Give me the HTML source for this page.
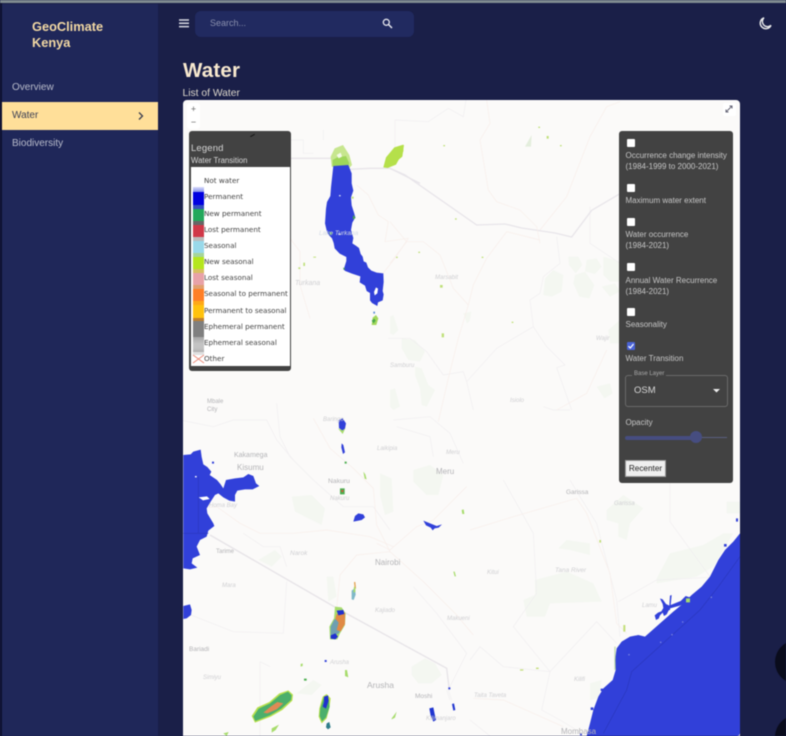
<!DOCTYPE html>
<html><head><meta charset="utf-8"><title>GeoClimate Kenya</title>
<style>
html,body{margin:0;padding:0;width:786px;height:736px;overflow:hidden;background:#1a1f48;}
body{font-family:"Liberation Sans",sans-serif;position:relative;}
#w{position:absolute;left:0;top:0;width:786px;height:736px;overflow:hidden;filter:blur(.45px);}
.a{position:absolute;white-space:nowrap;}
.nav{font-size:10px;color:#b9bccb;left:12px;}
.lg{position:absolute;left:204px;font:7.2px "DejaVu Sans",sans-serif;color:#444;white-space:nowrap;line-height:10px;}
.sw{position:absolute;left:193px;width:11px;height:16.2px;}
.cb{position:absolute;left:627px;width:8px;height:8px;background:#fff;border-radius:1px;}
.pl{position:absolute;left:625.5px;font-size:8px;line-height:10.5px;color:#c6c6c6;white-space:nowrap;}
</style></head><body><div id="w">
<div class="a" style="left:0;top:0;width:786px;height:3px;background:#7f8b90"></div>
<div class="a" style="left:0;top:3px;width:2px;height:733px;background:#0d1030"></div>
<div class="a" style="left:2px;top:4px;width:156px;height:732px;background:#1f2759"></div>

<div class="a" style="left:32px;top:19px;font-size:12.8px;line-height:16px;font-weight:bold;color:#f3d9a4;">GeoClimate<br>Kenya</div>
<div class="a nav" style="top:82px">Overview</div>
<div class="a" style="left:2px;top:102px;width:156px;height:28px;background:#ffdf99"></div>
<div class="a nav" style="top:110px;color:#3c3f55">Water</div>
<svg class="a" style="left:137px;top:111px" width="8" height="10" viewBox="0 0 8 10"><path d="M2 1.500l3.500 3.500-3.500 3.500" fill="none" stroke="#3a3d50" stroke-width="1.300"/></svg>
<div class="a nav" style="top:138px">Biodiversity</div>

<svg class="a" style="left:179px;top:19px" width="10" height="9" viewBox="0 0 10 9"><path d="M0 1h10M0 4.300h10M0 7.600h10" stroke="#d8d9e2" stroke-width="1.500"/></svg>
<div class="a" style="left:195px;top:11px;width:219px;height:26px;background:#212a60;border-radius:6px"></div>
<div class="a" style="left:210px;top:18px;font-size:9px;color:#8a90ad">Search...</div>
<svg class="a" style="left:382px;top:18px" width="11" height="11" viewBox="0 0 11 11"><circle cx="4.300" cy="4.300" r="3" fill="none" stroke="#e6e7ee" stroke-width="1.300"/><path d="M6.500 6.500L10 10" stroke="#e6e7ee" stroke-width="1.500"/></svg>
<svg class="a" style="left:758px;top:16px" width="15" height="15" viewBox="0 0 15 15"><path d="M6 1.800A5.600 5.600 0 1 0 13 9.300 4.800 4.800 0 0 1 6 1.800Z" fill="none" stroke="#eceded" stroke-width="1.400"/></svg>

<div class="a" style="left:183px;top:59px;font-size:20.500px;line-height:24px;font-weight:bold;color:#f8e9cf;letter-spacing:.2px">Water</div>
<div class="a" style="left:182.500px;top:87px;font-size:10.300px;line-height:13px;color:#ddd8cc;">List of Water</div>

<div class="a" style="left:775px;top:640px;width:44px;height:44px;border-radius:50%;background:#0a0c1c"></div>
<div class="a" style="left:775px;top:715px;width:44px;height:44px;border-radius:50%;background:#0a0c1c"></div>

<!-- map -->
<div class="a" style="left:183px;top:100px;width:557px;height:636px;background:#fbfaf9;border-radius:4px 4px 0 0;overflow:hidden"></div>
<svg class="a" style="left:0;top:0" width="786" height="736" viewBox="0 0 786 736">
<defs><clipPath id="c"><rect x="183" y="100" width="557" height="636" rx="3"/></clipPath></defs>
<g clip-path="url(#c)">
 <!-- north section (zoom 390,100) -->
 <g transform="translate(390 100) scale(.33333)">
  <g fill="#f4f7f1">
   <path d="M490 510l30 15-5 50-30 15-25-5 5-50z"/><path d="M555 525l30-10 28 40-15 40-30-5-18-40z"/><path d="M590 480l30-5 15 25-20 22-30-8z"/><path d="M640 470l50 15v60h-30l-20-20z"/><path d="M635 560l40-10 15 25-30 15z"/><path d="M535 470l30 0 12 25-20 25-20-25z"/>
   <path d="M35 715l40 5 30 35-15 30-35-5-20-35z"/><path d="M75 800l20 5 20 50 20 15-25 50-15-5-5-50-15-40z"/><path d="M0 870l15-5 15 55-20 10-10-10z"/><path d="M220 640l24-5-5 28-8 8z"/><path d="M0 650l10-5 15 45-15 15-10-5z"/><path d="M620 860l40-10 8 30-25 15zM655 690l35-30v70l-30 0z"/>
  </g>
  <path d="M405 140l20-35-2 35z" fill="#e4eedd"/>
  <g fill="none" stroke="#f0eef0" stroke-width="2">
   <path d="M15 60l0 120M15 60l100 5 60-40 45 25 8-50M600 320v110l90 60"/>
   <path d="M430 680l40 60 55 55-25 8 45 127M430 680l-110 65-90 100-10-30-60 10-50-70-50-40-65 0M230 845l20 85"/>
   <path d="M500 410l10 80-50 40-10 50-30 20 10 80"/>
   <path d="M540 930l-50 0-30 -10"/>
  </g>
  <path d="M0 205l45 20 215 150 85-3 50 12 100 15 50 12 60-80 85-50" fill="none" stroke="#e8e5ea" stroke-width="4"/>
  <g fill="none" stroke="#f8eeea" stroke-width="2">
   <path d="M290 0l10 70-30 50 25 150 25 35 70 25 50 50 10 50M450 390l80-100 70-180 50-90 40-15"/>
   <path d="M450 420l-100-25-60 80-40 80-15 60-30 100-30 120-30 130"/>
   <path d="M0 365l50 60 50 0 50 40 40 100 45 50M50 425L0 490"/>
   <path d="M650 750l-60 130-90 50"/>
  </g>
  <path d="M2 160l20-20 20-5-5 35-25 20-12 5z" fill="#b5e04a"/>
  <path d="M0 160l4-6 0 40-4 4z" fill="#b5e04a"/>
  <g fill="#bfe07a"><rect x="160" y="135" width="5" height="4"/><rect x="445" y="80" width="5" height="4"/><rect x="470" y="108" width="6" height="8"/><rect x="510" y="135" width="5" height="4"/><rect x="195" y="355" width="5" height="4"/><rect x="85" y="455" width="5" height="4"/><rect x="18" y="470" width="5" height="4"/><rect x="150" y="555" width="8" height="8"/><rect x="155" y="700" width="7" height="12"/><rect x="275" y="470" width="5" height="4"/><rect x="365" y="665" width="5" height="4"/></g>
 </g>

 <!-- south-west (zoom 180,400) -->
 <g transform="translate(180 400) scale(.33333)">
  <g fill="#f4f7f1">
   <path d="M695 800l40-25 30 15 20 35-30 25-40 0-20-25z"/><path d="M700 210l50-15 40 30-15 60-35 0-40-40z"/><path d="M335 290l60-5 40 40-10 50-30-15-50-25z"/><path d="M600 220l35 15 5 100-25 10-15-60z"/><path d="M440 530l20 0 10 60-25 15z"/><path d="M350 880l50-40 25 15-30 30zM235 480l50-30 20 20-30 30z"/>
  </g>
  <g fill="none" stroke="#f0eef0" stroke-width="2">
   <path d="M20 640l140 55 150 5 10-155M240 785v225M240 785l30 15M700 560l70 80 90 120-55 110 10 30"/>
   <path d="M190 400l60 40 50 0 20 60M640 60l110 -10 60 50 40 90M650 80l100 30 10 60M0 60l100 20 60 -20 100 0 30 60 50 60"/>
   <path d="M290 10l10 100 30 60 70 70 90 80 90 0 50 70M800 870l10 30"/>
  </g>
  <path d="M90 405L480 630l320 175 8 65" fill="none" stroke="#e7e4e8" stroke-width="4"/>
  <g fill="none" stroke="#f8eeea" stroke-width="2">
   <path d="M10 330l100-10 70 50 60 30 100 0 100-10 130 20 70 30M590 430l40 20 80-70 50-20 100-100"/>
   <path d="M630 455l-100 10-50 60-10 100M630 455l100 90 100 100 50 60M630 455l-40-80-10-110-60-60-70-60-50-90"/>
  </g>
  <path fill="#3140d9" d="M10 165L32 163 40 155 62 149 65 171 70 193 82 201 94 215 89 225 111 240 121 252 130 265 138 240 165 235 190 232 205 222 220 228 228 250 238 258 218 268 195 268 172 272 165 285 165 305 148 302 130 292 115 280 105 285 92 305 80 325 82 340 100 370 103 378 85 392 80 410 60 420 50 440 60 465 38 475 35 490 52 503 30 508 10 505Z"/>
  <path fill="#fff" d="M56 292l25-3 8 8-20 4zM45 228h5v4h-5z"/>
  <path fill="none" stroke="#2a37bc" stroke-width="2" d="M10 400h75M55 230v170"/>
  <path fill="#3140d9" d="M10 618L30 613 35 630 33 645 20 655 10 657ZM525 348L535 340 550 343 555 352 545 360 530 363 520 365Z"/>
  <path fill="#3140d9" d="M476 60L488 55 498 70 495 86 487 92 477 84ZM485 130L490 135 495 157 489 162 484 142ZM730 362L755 372 770 378 786 373 776 383 764 385 758 391 752 383 738 376ZM96 185h6v6h-6z"/>
  <path fill="#a7dc6c" d="M474 85L488 91 496 85 488 102ZM550 215L556 223 560 238 554 236ZM495 810L501 810 505 832 495 828ZM275 985L297 974 287 990 275 998ZM635 955L650 935 645 953 635 958Z"/>
  <path fill="#4caf50" d="M480 265h14v18h-14zM494 185h6v6h-6z"/>
  <path fill="#d8513c" d="M484 270h6v6h-6z"/>
  <!-- Natron -->
  <path fill="#a7dc6c" d="M465 620L485 622 497 640 495 675 480 700 472 718 450 718 448 680 462 655Z"/>
  <path fill="#6e9fb0" d="M462 660L490 640 492 675 476 700 452 712 452 680Z"/>
  <path fill="#e08a45" d="M470 642L495 638 495 672 482 694 470 690 476 668 466 656Z"/>
  <path fill="#2030d0" d="M470 632L490 630 493 642 475 646ZM452 706L466 700 474 710 466 718 452 716Z"/>
  <!-- Eyasi -->
  <path fill="#b7e04d" d="M215 948L232 922 268 906 298 880 325 871 339 884 337 902 307 930 272 950 225 968Z"/>
  <path fill="#4caf6b" d="M220 950L236 926 270 910 300 885 324 875 335 886 333 900 304 926 270 946 226 963Z"/>
  <path fill="#e08a55" d="M250 938L272 920 292 906 310 910 290 928 262 940Z"/>
  <!-- Manyara -->
  <path fill="#b7e04d" d="M418 925L428 890 440 882 452 895 448 925 440 955 425 970 416 950Z"/>
  <path fill="#4caf6b" d="M421 925L431 893 444 886 449 920 438 952 426 964 419 948Z"/>
  <path fill="#2030d0" d="M432 890L444 886 446 902 438 926 428 920 432 906Z"/>
  <path fill="#2f7d8a" d="M440 970L448 966 452 982 444 988 438 982Z"/>
  <path fill="#2035d0" d="M748 925L760 922 764 942 768 960 760 965 752 947ZM816 912L822 910 826 930 820 932Z"/>
  <path fill="#e3a14f" d="M522 546L526 546 528 566 524 566Z"/>
  <path fill="#7fb8c8" d="M515 572L525 564 527 584 521 600 515 598Z"/>
  <path fill="#a7dc6c" d="M522 560L526 562 526 576 520 578Z"/>
  <path fill="#4caf50" d="M372 836h8v6h-8z"/>
  <path fill="#3140d9" d="M434 780h6v6h-6zM805 862h6v6h-6z"/>
  <path fill="#a7dc6c" d="M362 792L368 790 368 798 362 800ZM130 1000L146 996 140 1008ZM845 330L851 328 853 342 847 342ZM820 515L824 515 828 529 824 529Z"/>
 </g>

 <!-- south-east (zoom 470,480) -->
 <g transform="translate(470 480) scale(.33333)">
  <g fill="#f4f7f1">
   <path d="M195 300L290 275 370 310 395 365 240 370 225 410 170 410 160 360 195 345Z"/><path d="M410 90L460 45 520 85 480 130 470 180 445 170 445 130 410 120Z"/><path d="M265 205L290 180 360 190 360 225 300 210Z"/><path d="M560 295L600 220 700 195 760 160 790 160 730 260 680 290 560 310Z"/><path d="M770 65h40v35h-40zM360 610L395 600 385 655 360 660Z"/>
  </g>
  <g fill="none" stroke="#f0eef0" stroke-width="2">
   <path d="M100 0L190 160 200 340 130 440 240 575 380 425 440 490"/>
   <path d="M600 0V125L720 290 745 320M445 365L560 300 720 292"/>
   <path d="M0 540L30 500 100 560 240 575 215 690 270 720 350 768M0 720L60 768"/>
   <path d="M300 0L330 50 380 130 440 360 450 470"/>
  </g>
  <g fill="none" stroke="#f8eeea" stroke-width="2">
   <path d="M0 150L130 110 320 55 350 100 420 280 440 430 470 460M10 655L100 660 190 700 280 740"/>
  </g>
  <path fill="#3140d9" d="M810 160L790 185 765 210 745 240 720 290 695 320 665 345 640 370 610 395 570 430 525 470 505 465 480 470 455 485 440 505 435 540 437 570 428 600 400 625 385 650 370 690 360 730 350 768H810Z"/>
  <path fill="#3140d9" d="M570 355L578 358 588 372 598 377 600 347 605 345 602 375 632 363 647 348 662 353 664 363 634 375 606 387 596 391 590 403 582 408 578 398 570 406 566 416 558 420 554 406 564 398 574 394 580 384 578 372 572 360Z"/>
  <path fill="#fff" d="M600 385L630 377 616 389 602 395Z"/>
  <path fill="none" stroke="#2a37bc" stroke-width="2" d="M810 230L745 320 690 390 590 480 485 575 470 630 400 760"/>
  <path fill="#a7dc6c" d="M648 355h12v12h-12z"/>
  <path fill="#3140d9" d="M362 682h8v8h-8zM392 626h7v7h-7zM762 192h8v8h-8zM798 115h6v10h-6zM330 760h6v6h-6z"/>
  <path fill="#a8cf8a" d="M433 500h4v70h-4z" opacity=".7"/>
  <path fill="#c2de78" d="M460 435h6v20h-6zM388 180h5v8h-5zM150 568h10v4h-10zM198 563h8v4h-8z"/>
  <path fill="#7b86e0" d="M475 522h4v4h-4zM570 485h4v4h-4zM604 462h4v4h-4zM636 424h4v4h-4zM722 350h4v4h-4z"/>
 </g>

 <!-- Turkana (zoom 290,130) -->
 <g transform="translate(290 130) scale(.33333)">
  <g fill="none" stroke="#f0eef0" stroke-width="2"><path d="M0 30h40l0 40 30 0M100 0v30"/><path d="M40 85h90"/></g>
  <path d="M0 85h130M180 118l60-3 60 0 90 45" fill="none" stroke="#e8e5ea" stroke-width="4"/>
  <g fill="none" stroke="#f8eeea" stroke-width="2"><path d="M200 165l35 30 30 60 30 20-10 60 70-10-40 60-40 50M0 325l30 40 0 100 30 100"/></g>
  <path fill="#c7e68f" d="M125 110L122 80 134 55 159 45 178 75 186 105 168 125Z"/>
  <path fill="#9fd65a" d="M128 108L128 90 142 82 168 78 178 100 172 115Z"/>
  <path fill="#fff" d="M140 75L152 68 156 80 146 85Z" opacity=".8"/>
  <path fill="#b5e04a" d="M280 112L288 82 313 52 340 44 340 64 318 104 293 114Z"/>
  <path fill="#a3d85c" d="M245 585L248 563 258 555 265 565 259 585Z"/>
  <path fill="#3140d9" d="M130 108L175 105 185 130 185 160 190 182 183 202 185 226 192 248 196 262 187 278 183 300 190 324 187 340 199 348 207 354 212 372 218 380 221 394 229 398 234 412 244 422 260 428 280 430 281 456 278 483 281 493 278 511 264 517 262 528 246 519 240 511 240 489 230 483 225 467 209 457 211 439 186 431 166 423 161 419 169 393 169 381 149 371 134 355 131 339 126 325 112 310 105 280 108 236 111 216 121 198 123 172Z"/>
  <path fill="#fff" d="M252 486L258 472 264 476 262 490 254 496Z"/>
  <path fill="#cfd4f5" d="M147 195h5v4h-5zM145 310h6v5h-6z"/>
  <path fill="#4aa84a" d="M118 305L128 309 120 316ZM190 255L197 264 188 268ZM160 412L166 417 160 419ZM245 572L253 566 257 572 251 580Z"/>
  <path fill="#5d8ed8" d="M250 545h5v6h-5z"/>
  <g fill="#bfe07a"><rect x="70" y="380" width="8" height="3"/><rect x="40" y="398" width="5" height="10"/><rect x="25" y="412" width="6" height="5"/><rect x="185" y="200" width="6" height="6"/></g>
 </g>
 <!-- labels -->
 <g font-family="Liberation Sans, sans-serif" fill="#b0b0b3">
  <g fill="#b4b4b7">
  <text x="234" y="457" font-size="7">Kakamega</text>
  <text x="237" y="470" font-size="8">Kisumu</text>
  <text x="328" y="483" font-size="6.800">Nakuru</text>
  <text x="436" y="474" font-size="8">Meru</text>
  <text x="375" y="565" font-size="8">Nairobi</text>
  <text x="367" y="688" font-size="8.500">Arusha</text>
  <text x="415" y="698" font-size="6.500">Moshi</text>
  <text x="189" y="651" font-size="6.500">Bariadi</text>
  <text x="216" y="553" font-size="6">Tarime</text>
  <text x="566" y="494" font-size="6.500">Garissa</text>
  <text x="561" y="734" font-size="8">Mombasa</text>
  <text x="207" y="403" font-size="6">Mbale</text>
  <text x="207" y="411" font-size="6">City</text>
  </g>
  <g font-style="italic" fill="#d0d0d3">
   <text x="295" y="285" font-size="7">Turkana</text>
   <text x="319" y="235" font-size="6.500" fill="#d3dbe6">Lake Turkana</text>
   <text x="323" y="421" font-size="6">Baringo</text>
   <text x="377" y="450" font-size="6">Laikipia</text>
   <text x="446" y="454" font-size="6">Meru</text>
   <text x="330" y="500" font-size="6">Nakuru</text>
   <text x="290" y="555" font-size="6.500">Narok</text>
   <text x="222" y="587" font-size="6">Mara</text>
   <text x="375" y="612" font-size="6">Kajiado</text>
   <text x="447" y="620" font-size="6">Makueni</text>
   <text x="330" y="664" font-size="6">Arusha</text>
   <text x="203" y="679" font-size="6">Simiyu</text>
   <text x="426" y="720" font-size="6">Kilimanjaro</text>
   <text x="614" y="505" font-size="6">Garissa</text>
   <text x="555" y="572" font-size="6.500">Tana River</text>
   <text x="487" y="574" font-size="6">Kitui</text>
   <text x="642" y="607" font-size="6">Lamu</text>
   <text x="574" y="681" font-size="6">Kilifi</text>
   <text x="474" y="697" font-size="6">Taita Taveta</text>
   <text x="209" y="507" font-size="6">Homa Bay</text>
   <text x="390" y="367" font-size="6">Samburu</text>
   <text x="435" y="279" font-size="6">Marsabit</text>
   <text x="510" y="402" font-size="6">Isiolo</text>
   <text x="596" y="340" font-size="6">Wajir</text>
  </g>
 </g>
</g>
</svg>

<!-- zoom ctrl -->
<div class="a" style="left:187px;top:103px;width:13px;height:26px;background:#fff;border-radius:3px"></div>
<div class="a" style="left:187px;top:103px;width:13px;text-align:center;font-size:9px;line-height:12px;color:#666">+</div>
<div class="a" style="left:187px;top:116px;width:13px;text-align:center;font-size:9px;line-height:12px;color:#666">−</div>
<div class="a" style="left:723px;top:103px;width:13px;height:13px;background:#fff;border-radius:2px"></div>
<svg class="a" style="left:725px;top:105px" width="8" height="8" viewBox="0 0 8 8"><path d="M1.500 6.500L6.500 1.500M4.500 1H7v2.500M1 4.500V7h2.500" fill="none" stroke="#667" stroke-width="1"/></svg>

<!-- legend -->
<div class="a" style="left:189px;top:131px;width:102px;height:240px;background:#424242;border-radius:3px"></div>
<div class="a" style="left:250px;top:135px;width:5px;height:1px;background:#111;transform:rotate(-30deg)"></div>
<div class="a" style="left:191px;top:143px;font-size:9.500px;line-height:12px;color:#d4d4d4;letter-spacing:.15px">Legend</div>
<div class="a" style="left:191px;top:155px;font-size:7.800px;line-height:11px;color:#d8d8d8;">Water Transition</div>
<div class="a" style="left:191px;top:167px;width:99px;height:199px;background:#fff"></div>

<div class="sw" style="top:187px;height:8px;background:linear-gradient(#d9dcfa,#5060e0)"></div>
<div class="sw" style="top:192px;background:#0000df"></div>
<div class="sw" style="top:205px;height:4px;background:#3650c0"></div>
<div class="sw" style="top:208.500px;background:#23a85b"></div>
<div class="sw" style="top:221px;height:4px;background:#666"></div>
<div class="sw" style="top:224.500px;background:#d03848"></div>
<div class="sw" style="top:237px;height:4px;background:#bbb"></div>
<div class="sw" style="top:240.500px;background:#99d9ea"></div>
<div class="sw" style="top:253px;height:4px;background:#a6d59a"></div>
<div class="sw" style="top:256.500px;background:#b5e61d"></div>
<div class="sw" style="top:269px;height:4px;background:#d8c060"></div>
<div class="sw" style="top:272.500px;background:#e8a2a8"></div>
<div class="sw" style="top:285px;height:4px;background:#e0a070"></div>
<div class="sw" style="top:288.500px;background:#ff7f27"></div>
<div class="sw" style="top:301px;height:4px;background:#ffa818"></div>
<div class="sw" style="top:304.500px;height:13px;background:#ffc20e"></div>
<div class="sw" style="top:317.500px;height:4px;background:#c08030"></div>
<div class="sw" style="top:320.500px;background:#7f7f7f"></div>
<div class="sw" style="top:336.500px;height:16px;background:linear-gradient(#a5a5a5,#c3c3c3 40%,#c3c3c3 70%,#aaa)"></div>
<div class="sw" style="top:352px;height:3px;background:#e0e0e0"></div>
<svg class="a" style="left:192px;top:354px" width="13" height="10" viewBox="0 0 13 10"><path d="M1 1l11 8M12 1L1 9" stroke="#ea8a78" stroke-width="1"/></svg>

<div class="lg" style="top:176px">Not water</div>
<div class="lg" style="top:192px">Permanent</div>
<div class="lg" style="top:208.500px">New permanent</div>
<div class="lg" style="top:224.500px">Lost permanent</div>
<div class="lg" style="top:241px">Seasonal</div>
<div class="lg" style="top:257px">New seasonal</div>
<div class="lg" style="top:273px">Lost seasonal</div>
<div class="lg" style="top:289px">Seasonal to permanent</div>
<div class="lg" style="top:305.500px">Permanent to seasonal</div>
<div class="lg" style="top:321.500px">Ephemeral permanent</div>
<div class="lg" style="top:338px">Ephemeral seasonal</div>
<div class="lg" style="top:354px">Other</div>

<!-- control panel -->
<div class="a" style="left:619px;top:131px;width:114px;height:352px;background:#424242;border-radius:3px"></div>
<div class="cb" style="top:139px"></div>
<div class="pl" style="top:151px">Occurrence change intensity<br>(1984-1999 to 2000-2021)</div>
<div class="cb" style="top:184px"></div>
<div class="pl" style="top:196px">Maximum water extent</div>
<div class="cb" style="top:218px"></div>
<div class="pl" style="top:230px">Water occurrence<br>(1984-2021)</div>
<div class="cb" style="top:263px"></div>
<div class="pl" style="top:276px">Annual Water Recurrence<br>(1984-2021)</div>
<div class="cb" style="top:308px"></div>
<div class="pl" style="top:320px">Seasonality</div>
<div class="cb" style="top:342px;background:#4a63d8"></div>
<svg class="a" style="left:627px;top:342px" width="8" height="8" viewBox="0 0 8 8"><path d="M1.500 4.200L3.300 6 6.500 2" fill="none" stroke="#fff" stroke-width="1.200"/></svg>
<div class="pl" style="top:354px">Water Transition</div>

<div class="a" style="left:625px;top:375px;width:101px;height:30px;border:1px solid #6a6a6a;border-radius:3px"></div>
<div class="a" style="left:632px;top:370px;padding:0 2px;background:#424242;font-size:6px;line-height:8px;color:#aaa;">Base Layer</div>
<div class="a" style="left:634px;top:385px;font-size:9.500px;line-height:11px;color:#d8d8d8;">OSM</div>
<svg class="a" style="left:713px;top:389px" width="7" height="4" viewBox="0 0 7 4"><path d="M0 0h7L3.500 3.500z" fill="#eee"/></svg>
<div class="pl" style="top:418px">Opacity</div>
<div class="a" style="left:625px;top:435.500px;width:72px;height:4px;background:#464d80;border-radius:2px"></div>
<div class="a" style="left:697px;top:437px;width:30px;height:1px;background:#5a5f80"></div>
<div class="a" style="left:690px;top:431px;width:12px;height:12px;border-radius:50%;background:#464d80"></div>
<div class="a" style="left:625px;top:460px;width:41px;height:17px;background:#efefef;border:1px solid #9a9a9a;box-sizing:border-box;text-align:center;font-size:8.200px;line-height:16px;color:#222">Recenter</div>
</div></body></html>
